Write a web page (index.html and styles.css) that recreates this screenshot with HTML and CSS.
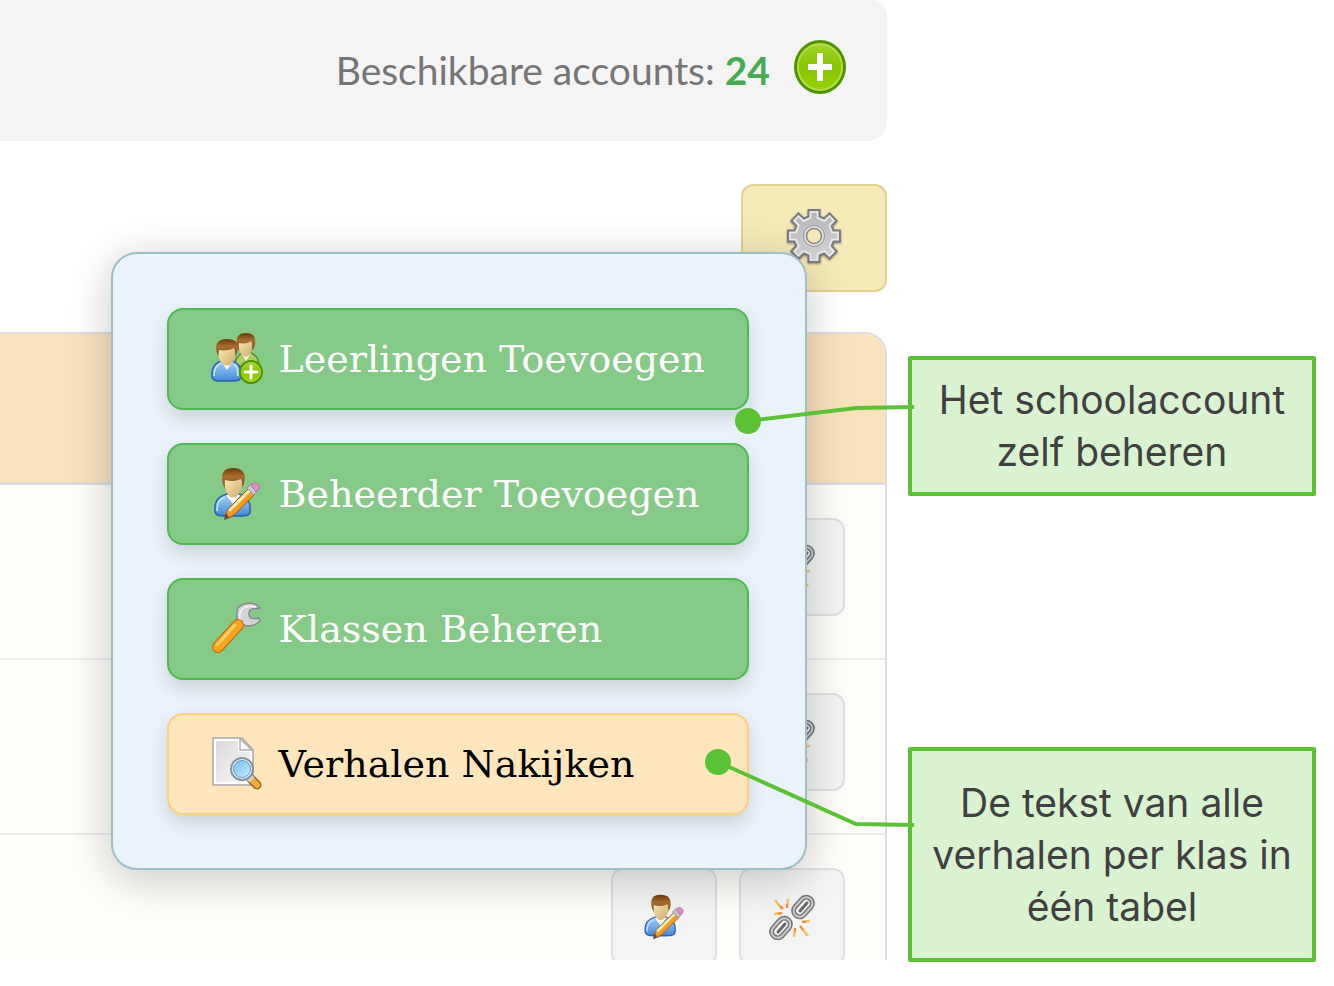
FILE: index.html
```html
<!DOCTYPE html>
<html lang="nl">
<head>
  <meta charset="UTF-8">
  <meta name="viewport" content="width=device-width, initial-scale=1.0">
  <title>Schoolaccount beheren</title>
  <link rel="stylesheet" href="styles.css">
</head>
<body>
  <!-- shared icons -->
  <svg class="icon-defs" aria-hidden="true">
    <defs>
      <linearGradient id="hair" x1="0" y1="0" x2="0" y2="1">
        <stop offset="0" stop-color="#6e3a08"/><stop offset=".4" stop-color="#a86f30"/><stop offset="1" stop-color="#70400f"/>
      </linearGradient>
      <linearGradient id="skin" x1="0" y1="0" x2="1" y2="1">
        <stop offset="0" stop-color="#fbe8b8"/><stop offset="1" stop-color="#d0a968"/>
      </linearGradient>
      <linearGradient id="shirt" x1="0" y1="0" x2="0" y2="1">
        <stop offset="0" stop-color="#a5d0fb"/><stop offset="1" stop-color="#4488d8"/>
      </linearGradient>
      <linearGradient id="metal" x1="0" y1="0" x2="0" y2="1">
        <stop offset="0" stop-color="#b4b4b8"/><stop offset="1" stop-color="#d9d9dc"/>
      </linearGradient>
      <linearGradient id="paper" x1="0" y1="0" x2="1" y2="1">
        <stop offset="0" stop-color="#d9d9d9"/><stop offset="1" stop-color="#fafafa"/>
      </linearGradient>
      <linearGradient id="lens" x1="0" y1="0" x2="1" y2="1">
        <stop offset="0" stop-color="#73bdf3"/><stop offset="1" stop-color="#c8f0ff"/>
      </linearGradient>
      <linearGradient id="lime" x1="0" y1="0" x2="0" y2="1">
        <stop offset="0" stop-color="#a3d52a"/><stop offset=".5" stop-color="#86c400"/><stop offset="1" stop-color="#98d400"/>
      </linearGradient>
    </defs>

    <symbol id="icon-plus" viewBox="0 0 52 54">
      <ellipse cx="26" cy="27" rx="26" ry="27" fill="#4d9400"/>
      <ellipse cx="26" cy="27" rx="22" ry="23" fill="url(#lime)" stroke="#b4dc4c" stroke-width="2"/>
      <path d="M26 13v28M14 27h24" stroke="#fff" stroke-width="6" stroke-linejoin="round"/>
    </symbol>

    <symbol id="icon-gear" viewBox="0 0 56 56">
      <path d="M22.500 2.000h11v6.500l4.500 2 5.500-5 7.200 7.200-5 5.500 2 4.300H54v11h-6.300l-2 4.300 5 5.500-7.200 7.200-5.500-5-4.500 2V54h-11v-6.500l-4.500-2-5.500 5-7.200-7.200 5-5.500-2-4.300H2v-11h6.300l2-4.300-5-5.500 7.200-7.200 5.500 5 4.500-2z" fill="url(#metal)" stroke="#7c7c7e" stroke-width="2"/>
      <path d="M24.500 4h7v6l7 3 5-5 4.200 4.500-4.500 5 2.800 7H52v7h-6l-2.800 7 4.500 5-4.200 4.500-5-5-7 3v6h-7v-6l-7-3-5 5-4.200-4.500 4.500-5L10 31.500H4v-7h6l2.800-7-4.500-5L12.500 8l5 5 7-3z" fill="none" stroke="#f0f0f0" stroke-width="1.500"/>
      <circle cx="28" cy="28" r="9" fill="#f7eab9" stroke="#e4e4e6" stroke-width="3"/>
      <circle cx="28" cy="28" r="10.500" fill="none" stroke="#97979a"/>
      <circle cx="28" cy="28" r="7.500" fill="#f7eab9" stroke="#858587" stroke-width="1.500"/>
    </symbol>

    <symbol id="icon-users-add" viewBox="0 0 52 52">
      <path d="M24 33c0-8 3-11 7-13h9c5 2 8 6 8 13z" fill="#a9d068" stroke="#5c8d25" stroke-width="1.500"/>
      <path d="M30 20l5 8 5-8z" fill="#f8f6e6"/>
      <path d="M26 15c-2-10 1-15 9-15s11 5 8 15l-3 3H29z" fill="url(#hair)"/>
      <path d="M28 10c5 1 10 0 12-2l1 2c1 6-1 10-3 12-2 2-5 2-7 0-2-3-4-6-3-12z" fill="url(#skin)"/>
      <path d="M1 44c-1-9 2-14 10-16h10c7 2 10 7 9 16-1 4-4 4-15 4s-13 0-14-4z" fill="url(#shirt)" stroke="#2b62b0" stroke-width="1.500"/>
      <path d="M3 43c0-7 2-11 7-13M27 43c0-7-1-10-4-12" fill="none" stroke="#cde6ff" stroke-width="1.500"/>
      <path d="M10 28l6 9 6-9z" fill="#fff"/>
      <path d="M6 20C3 11 7 6 16 6s13 5 10 14l-3 5H9z" fill="url(#hair)"/>
      <path d="M8 17c6 1 12 0 15-2l1 3c1 6-1 10-4 13-2 2-6 2-8 0-4-3-5-8-4-14z" fill="url(#skin)"/>
      <circle cx="40" cy="39" r="12" fill="#4b9300"/>
      <circle cx="40" cy="39" r="9.500" fill="url(#lime)" stroke="#b2dd4a"/>
      <path d="M40 33v12M34 39h12" stroke="#fff" stroke-width="3" stroke-linecap="round"/>
    </symbol>

    <symbol id="icon-user-edit" viewBox="0 0 52 54">
      <path d="M4 45c-1-10 2-15 12-18h12c9 3 12 8 11 18-1 4-4 4-17 4s-17 0-18-4z" fill="url(#shirt)" stroke="#2b62b0" stroke-width="1.500"/>
      <path d="M6 44c0-8 2-12 8-14" fill="none" stroke="#cde6ff" stroke-width="1.500"/>
      <path d="M15 28l7 9 7-9z" fill="#fff"/>
      <path d="M12 17C9 6 13 1 22 1s14 5 11 16l-4 6H15z" fill="url(#hair)"/>
      <path d="M14 13c6 2 12 1 16-1l1 3c1 6-2 11-5 14-2 2-6 2-8 0-3-4-5-9-4-16z" fill="url(#skin)"/>
      <path d="M13 53l2-8 6 5z" fill="#5d4638"/>
      <path d="M15 46l3-5 20-20 6 6-20 20-6 4z" fill="#f39a21" stroke="#a35d10"/>
      <path d="M18 44l21-21" stroke="#ffebb8" stroke-width="3"/>
      <path d="M36 21l4-4 7 6-4 5z" fill="#c7cbd1" stroke="#8e9299"/>
      <path d="M40 18l3-2c3-1 7 3 5 6l-3 3z" fill="#df91c7" stroke="#b56f9f"/>
    </symbol>

    <symbol id="icon-wrench" viewBox="0 0 52 54">
      <path d="M26 25l6-7" stroke="#8b8d91" stroke-width="7"/>
      <path d="M49 6l-3-3c-6-3-15-2-19 3-2 4-1 9-1 11l-3 5 5 4 4-3c6 2 12 1 17-4l-1-3c-5 1-8 1-9-1-2-3-1-7 2-8 2-1 5 0 8-1z" fill="#d1d3d6" stroke="#86888c" stroke-width="1.500"/>
      <path d="M45 5c-8-2-15 0-16 7-1 5 1 9 5 9" fill="none" stroke="#f4f4f5" stroke-width="1.500"/>
      <path d="M7 45l20-22" stroke="#b8690e" stroke-width="12" stroke-linecap="round"/>
      <path d="M7 45l20-22" stroke="#fba31f" stroke-width="10" stroke-linecap="round"/>
      <path d="M6 43l18-20" stroke="#ffcf62" stroke-width="3" stroke-linecap="round"/>
    </symbol>

    <symbol id="icon-page-find" viewBox="0 0 52 54">
      <path d="M2 1h29l11 12v35H2z" fill="#fff" stroke="#a6a6a8" stroke-width="1.500"/>
      <path d="M5 4h22v11h12v30H5z" fill="url(#paper)"/>
      <path d="M29 2v11h12z" fill="#fff" stroke="#b1b1b1" stroke-width="1.500"/>
      <path d="M40 42l6 6" stroke="#9a6a25" stroke-width="9" stroke-linecap="round"/>
      <path d="M40 42l6 6" stroke="#f6ad35" stroke-width="6" stroke-linecap="round"/>
      <path d="M38 40l3 3" stroke="#d5d5d8" stroke-width="7"/>
      <circle cx="31" cy="32" r="11" fill="#f1f5f8" stroke="#8a9097" stroke-width="2"/>
      <circle cx="31" cy="32" r="8.500" fill="url(#lens)" stroke="#569ed8"/>
    </symbol>

    <symbol id="icon-unlink" viewBox="0 0 46 46">
      <g fill="none">
        <rect x="23" y="7" width="22" height="12" rx="6" transform="rotate(-48 34 13)" stroke="#747679" stroke-width="5"/>
        <rect x="23" y="7" width="22" height="12" rx="6" transform="rotate(-48 34 13)" stroke="#c9cbcd" stroke-width="2"/>
        <path d="M31 17l7-8" stroke="#66686b" stroke-width="3" stroke-linecap="round"/>
        <rect x="1" y="28" width="22" height="12" rx="6" transform="rotate(-48 12 34)" stroke="#747679" stroke-width="5"/>
        <rect x="1" y="28" width="22" height="12" rx="6" transform="rotate(-48 12 34)" stroke="#c9cbcd" stroke-width="2"/>
        <path d="M9 38l7-8" stroke="#66686b" stroke-width="3" stroke-linecap="round"/>
        <path d="M6 6l7 9M19 5l-1 9M5 20l8-1M26 34l-1 9M31 32l8 10M33 28l8-1" stroke="#f8c265" stroke-width="2.500"/>
        <path d="M11 12l3 3M18 10v4M9 20l4-1M26 34v4M31 32l3 4M33 28h4" stroke="#ee8b3d" stroke-width="2"/>
      </g>
    </symbol>
  </svg>

  <div class="page">
    <main class="panel">
      <header class="account-bar">
        <p class="account-count">Beschikbare accounts: <strong>24</strong></p>
        <button type="button" class="add-button" aria-label="Accounts toevoegen">
          <svg class="icon-add"><use href="#icon-plus"/></svg>
        </button>
      </header>

      <div class="toolbar">
        <button type="button" class="settings-button" aria-label="Instellingen">
          <svg class="icon-settings"><use href="#icon-gear"/></svg>
        </button>
        <nav class="menu">
          <button type="button" class="menu-item"><svg class="icon-menu"><use href="#icon-users-add"/></svg>Leerlingen Toevoegen</button>
          <button type="button" class="menu-item"><svg class="icon-menu"><use href="#icon-user-edit"/></svg>Beheerder Toevoegen</button>
          <button type="button" class="menu-item"><svg class="icon-menu"><use href="#icon-wrench"/></svg>Klassen Beheren</button>
          <button type="button" class="menu-item review"><svg class="icon-menu"><use href="#icon-page-find"/></svg>Verhalen Nakijken</button>
        </nav>
      </div>

      <div class="table-frame">
        <table class="users">
          <thead>
            <tr><th></th></tr>
          </thead>
          <tbody>
            <tr>
              <td>
                <div class="actions">
                  <button type="button" class="action" aria-label="Bewerken"><svg class="icon-action"><use href="#icon-user-edit"/></svg></button>
                  <button type="button" class="action" aria-label="Ontkoppelen"><svg class="icon-action"><use href="#icon-unlink"/></svg></button>
                </div>
              </td>
            </tr>
            <tr>
              <td>
                <div class="actions">
                  <button type="button" class="action" aria-label="Bewerken"><svg class="icon-action"><use href="#icon-user-edit"/></svg></button>
                  <button type="button" class="action" aria-label="Ontkoppelen"><svg class="icon-action"><use href="#icon-unlink"/></svg></button>
                </div>
              </td>
            </tr>
            <tr>
              <td>
                <div class="actions">
                  <button type="button" class="action" aria-label="Bewerken"><svg class="icon-action"><use href="#icon-user-edit"/></svg></button>
                  <button type="button" class="action" aria-label="Ontkoppelen"><svg class="icon-action"><use href="#icon-unlink"/></svg></button>
                </div>
              </td>
            </tr>
          </tbody>
        </table>
      </div>
    </main>

    <aside class="notes">
      <div class="note">
        Het schoolaccount zelf beheren
        <svg class="pointer pointer-manage" viewBox="0 0 180 36">
          <path d="M14 21L122 8l58-1"/>
          <circle cx="14" cy="21" r="13"/>
        </svg>
      </div>
      <div class="note note-tall">
        De tekst van alle verhalen per klas in één tabel
        <svg class="pointer pointer-review" viewBox="0 0 210 84">
          <path d="M14 15l138 62 58 1"/>
          <circle cx="14" cy="15" r="13"/>
        </svg>
      </div>
    </aside>
  </div>
</body>
</html>
```

FILE: styles.css
```css
* {
  box-sizing: border-box;
}

body {
  margin: 0;
  background: #fff;
  font-family: 'Lato', sans-serif;
}

button {
  font-family: inherit;
  padding: 0;
  cursor: pointer;
}

svg {
  display: block;
  flex: none;
  overflow: visible;
}

.icon-defs {
  position: absolute;
  width: 0;
  height: 0;
}

.page {
  display: grid;
  grid-template-columns: 1fr 408px;
  gap: 21px;
  padding-right: 18px;
}

.panel {
  height: calc(100vh - 26px);
  overflow: hidden;
}

/* top bar */
.account-bar {
  display: flex;
  align-items: center;
  justify-content: flex-end;
  gap: 24px;
  padding: 37px 41px 44px 0;
  background: #f4f4f4;
  border-radius: 0 16px 20px 0;
}

.account-count {
  margin: 0;
  padding-top: 6px;
  font-size: 39px;
  line-height: 54px;
  color: #757575;
}

.account-count strong {
  color: #43ad50;
}

.add-button {
  border: none;
  background: none;
}

.icon-add {
  width: 52px;
  height: 54px;
}

/* settings button with its menu */
.toolbar {
  position: relative;
  display: flex;
  justify-content: flex-end;
  padding: 43px 0 40px;
}

.settings-button {
  display: flex;
  align-items: center;
  justify-content: center;
  width: 146px;
  height: 108px;
  padding-bottom: 4px;
  background: #f7eab9;
  border: 2px solid #e2d190;
  border-radius: 12px;
}

.icon-settings {
  width: 56px;
  height: 56px;
  filter: drop-shadow(0 1px 1px rgba(0, 0, 0, 0.4));
}

.menu {
  position: absolute;
  top: 111px;
  right: 80px;
  z-index: 1;
  display: flex;
  flex-direction: column;
  gap: 33px;
  padding: 54px 56px 53px 54px;
  background: #eaf3fb;
  border: 2px solid #a0bfc4;
  border-radius: 26px;
  box-shadow: 0 8px 44px rgba(0, 0, 0, 0.22);
}

.menu-item {
  display: flex;
  align-items: center;
  gap: 16px;
  padding: 22px 42px;
  font-family: 'DejaVu Serif', serif;
  font-size: 38px;
  line-height: 54px;
  white-space: nowrap;
  color: #fff;
  background: #85ca87;
  border: 2px solid #4cba50;
  border-radius: 16px;
  box-shadow: 0 8px 18px rgba(0, 0, 0, 0.14);
}

.menu-item.review {
  color: #000;
  background: #ffe6bc;
  border-color: #ffcf7e;
}

.icon-menu {
  width: 52px;
  height: 54px;
}

/* table */
.table-frame {
  border: 2px solid #ddd;
  border-left: none;
  border-radius: 0 22px 0 0;
  overflow: hidden;
}

.users {
  width: 100%;
  border-spacing: 0;
}

.users th {
  height: 151px;
  padding: 0;
  background: #f9e3bd;
  border-bottom: 3px solid #ddd;
}

.users td {
  padding: 33px 40px 42px 0;
  background: #fffdf9;
  border-bottom: 2px solid #ececec;
}

.actions {
  display: flex;
  justify-content: flex-end;
  gap: 22px;
}

.action {
  display: flex;
  align-items: center;
  justify-content: center;
  width: 106px;
  height: 98px;
  background: #f4f4f4;
  border: 2px solid #e0e0e0;
  border-radius: 12px;
}

.icon-action {
  width: 46px;
  height: 46px;
}

/* notes beside the page */
.notes {
  position: relative;
  z-index: 2;
  display: flex;
  flex-direction: column;
  gap: 251px;
  padding-top: 356px;
}

.note {
  position: relative;
  padding: 14px 16px;
  font-family: 'Inter', sans-serif;
  font-size: 39px;
  line-height: 52px;
  text-align: center;
  color: #404040;
  background: #d9f2d0;
  border: 4px solid #5bc236;
  border-radius: 2px;
}

.note-tall {
  padding: 26px 16px 25px;
}

.pointer {
  position: absolute;
  right: calc(100% - 2px);
  fill: #5bc236;
}

.pointer path {
  fill: none;
  stroke: #5bc236;
  stroke-width: 4;
}

.pointer-manage {
  top: 40px;
  width: 180px;
}

.pointer-review {
  top: -4px;
  width: 210px;
}
```
